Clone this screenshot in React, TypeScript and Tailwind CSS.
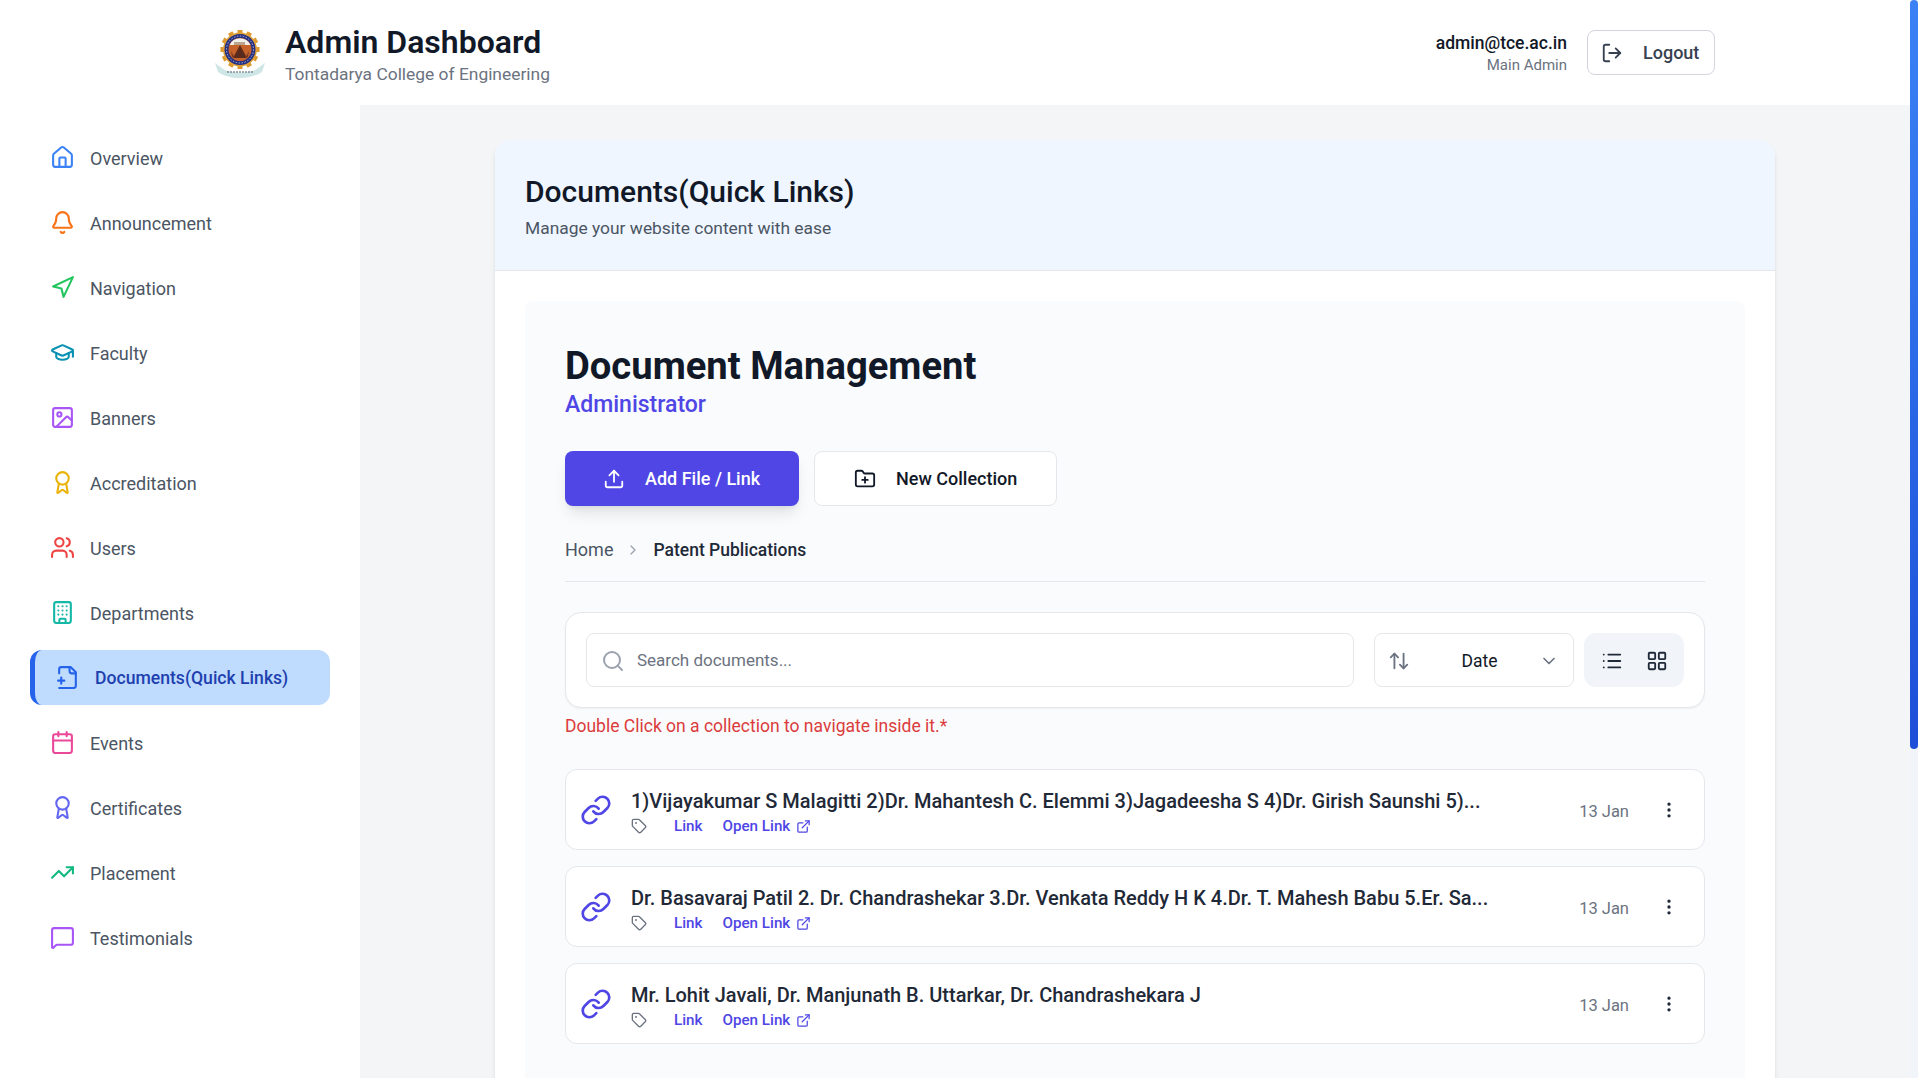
import {
  ArrowUpDown,
  Award,
  Bell,
  Building,
  Calendar,
  ChevronDown,
  ChevronRight,
  EllipsisVertical,
  ExternalLink,
  FolderPlus,
  GraduationCap,
  House,
  Image as ImageIcon,
  LayoutGrid,
  Link as LinkIcon,
  List,
  LogOut,
  MessageSquare,
  Navigation,
  Search,
  Tag,
  TrendingUp,
  Upload,
  Users,
} from 'lucide-react';

function FileAdd({ size, className }: { size: number; className?: string }) {
  return (
    <svg
      width={size}
      height={size}
      viewBox="0 0 24 24"
      fill="none"
      stroke="currentColor"
      strokeWidth="2"
      strokeLinecap="round"
      strokeLinejoin="round"
      className={className}
    >
      <path d="M4 22h14a2 2 0 0 0 2-2V7l-5-5H6a2 2 0 0 0-2 2v4" />
      <path d="M14 2v4a2 2 0 0 0 2 2h4" />
      <path d="M3 15h6" />
      <path d="M6 12v6" />
    </svg>
  );
}

const navItems = [
  { label: 'Overview', icon: House, color: 'text-[#3b82f6]' },
  { label: 'Announcement', icon: Bell, color: 'text-[#f97316]' },
  { label: 'Navigation', icon: Navigation, color: 'text-[#22c55e]' },
  { label: 'Faculty', icon: GraduationCap, color: 'text-[#0891b2]' },
  { label: 'Banners', icon: ImageIcon, color: 'text-[#a855f7]' },
  { label: 'Accreditation', icon: Award, color: 'text-[#eab308]' },
  { label: 'Users', icon: Users, color: 'text-[#ef4444]' },
  { label: 'Departments', icon: Building, color: 'text-[#14b8a6]' },
  { label: 'Documents(Quick Links)', icon: FileAdd, color: 'text-[#2563eb]', active: true },
  { label: 'Events', icon: Calendar, color: 'text-[#ec4899]' },
  { label: 'Certificates', icon: Award, color: 'text-[#6366f1]' },
  { label: 'Placement', icon: TrendingUp, color: 'text-[#10b981]' },
  { label: 'Testimonials', icon: MessageSquare, color: 'text-[#a855f7]' },
];

const documents = [
  '1)Vijayakumar S Malagitti 2)Dr. Mahantesh C. Elemmi 3)Jagadeesha S 4)Dr. Girish Saunshi 5)...',
  'Dr. Basavaraj Patil 2. Dr. Chandrashekar 3.Dr. Venkata Reddy H K 4.Dr. T. Mahesh Babu 5.Er. Sa...',
  'Mr. Lohit Javali, Dr. Manjunath B. Uttarkar, Dr. Chandrashekara J',
];

function CollegeLogo() {
  const teeth = Array.from({ length: 12 }, (_, i) => i * 30);
  return (
    <svg viewBox="0 0 56 56" className="h-14 w-14 shrink-0">
      <path d="M3 38c5 3 8 7 13 8 8 2 16 2 24 0 5-1 8-5 13-8l-3 9c-6 4-14 6-22 6s-16-2-22-6z" fill="#cfe6e6" />
      {teeth.map((deg) => (
        <rect key={deg} x="25.5" y="5" width="5" height="5" fill="#e0992c" transform={`rotate(${deg} 28 24.5)`} />
      ))}
      <circle cx="28" cy="24.5" r="17" fill="#e0a33c" />
      <circle cx="28" cy="24.5" r="15.5" fill="#26307f" />
      <circle cx="28" cy="24.5" r="13.5" fill="none" stroke="#aeb4dc" strokeWidth="1" strokeDasharray="1.5 1.5" />
      <circle cx="28" cy="24.5" r="11.5" fill="#c8622b" />
      <path d="M17.5 20a11.5 11.5 0 0 1 21 0z" fill="#f1efe9" />
      <path d="M22 17h11v3H22z" fill="#b9a48e" />
      <path d="M28 20l7 13h-14z" fill="#5a2a1c" />
      <path d="M19 26l4 7-3-1zM37 26l-4 7 3-1z" fill="#7c3a1e" />
      <path d="M15 47h26" stroke="#55616b" strokeWidth="1.2" strokeDasharray="2 1" />
    </svg>
  );
}

function Header() {
  return (
    <header className="flex h-[105px] shrink-0 items-center justify-between bg-white pl-[212px] pr-[195px] shadow-[0_1px_3px_rgba(0,0,0,0.08)]">
      <div className="flex items-center gap-[17px]">
        <CollegeLogo />
        <div>
          <h1 className="text-[32px] font-semibold leading-[42px] text-[#111827]">Admin Dashboard</h1>
          <p className="text-[17.4px] leading-[22px] text-[#6b7280]">Tontadarya College of Engineering</p>
        </div>
      </div>
      <div className="flex items-center gap-5">
        <div className="pt-[3px] text-right">
          <p className="text-[17.5px] font-medium leading-[22px] text-[#111827]">admin@tce.ac.in</p>
          <p className="text-[15px] leading-[22px] text-[#6b7280]">Main Admin</p>
        </div>
        <button className="flex h-[45px] w-[128px] items-center gap-5 rounded-lg border border-[#d1d5db] bg-white pl-[13px] text-[18px] font-medium text-[#374151]">
          <LogOut size={22} />
          Logout
        </button>
      </div>
    </header>
  );
}

function Sidebar() {
  return (
    <aside className="w-[360px] shrink-0 bg-white pt-[25px]">
      <nav className="flex flex-col gap-[10px] px-[30px]">
        {navItems.map(({ label, icon: Icon, color, active }) => (
          <a
            key={label}
            className={
              active
                ? 'flex h-[55px] items-center gap-[15px] rounded-xl border-l-[5px] border-[#2563eb] bg-[#bfdbfe] pl-5 text-[17.6px] font-medium text-[#1e40af]'
                : 'flex h-[55px] items-center gap-[15px] pl-5 text-[18px] font-[450] text-[#4b5563]'
            }
          >
            <Icon size={25} className={color} />
            <span className="pt-px">{label}</span>
          </a>
        ))}
      </nav>
    </aside>
  );
}

function DocumentRow({ title }: { title: string }) {
  return (
    <div className="flex h-[81px] items-center rounded-xl border border-[#e5e7eb] bg-white pl-[14px] pr-[25px]">
      <LinkIcon size={32} className="shrink-0 text-[#4f46e5]" />
      <div className="ml-[19px] pt-[6px]">
        <p className="mb-px text-[20px] font-medium leading-[26px] text-[#1f2937]">{title}</p>
        <div className="flex items-center text-[15.2px] font-medium leading-[22px] text-[#4f46e5]">
          <Tag size={16} className="mr-[27px] text-[#6b7280]" />
          <span>Link</span>
          <span className="ml-5">Open Link</span>
          <ExternalLink size={15} className="ml-[6px]" />
        </div>
      </div>
      <span className="ml-auto pt-[5px] text-[16.5px] text-[#6b7280]">13 Jan</span>
      <EllipsisVertical size={20} className="ml-[30px] text-[#1f2937]" />
    </div>
  );
}

function DocumentManager() {
  return (
    <div className="rounded-lg bg-[#f9fbfd] p-10">
      <h2 className="text-[38.2px] font-bold leading-[51px] text-[#111827]">Document Management</h2>
      <p className="text-[23px] font-medium leading-[26px] text-[#4f46e5]">Administrator</p>

      <div className="mt-[33px] flex gap-[15px]">
        <button className="flex h-[55px] w-[234px] items-center gap-5 rounded-lg bg-[#4f46e5] pl-[38px] text-[18px] font-medium text-white shadow-lg">
          <Upload size={22} />
          Add File / Link
        </button>
        <button className="flex h-[55px] w-[243px] items-center gap-5 rounded-lg border border-[#e5e7eb] bg-white pl-[39px] text-[18px] font-medium text-[#111827]">
          <FolderPlus size={22} />
          New Collection
        </button>
      </div>

      <div className="mt-8 flex items-center border-b border-[#e5e7eb] pb-[19px] text-[18px] leading-6">
        <span className="text-[#4b5563]">Home</span>
        <ChevronRight size={16} className="mx-3 text-[#9ca3af]" />
        <span className="text-[17.5px] font-medium text-[#1f2937]">Patent Publications</span>
      </div>

      <div className="mt-[30px] flex gap-5 rounded-2xl border border-[#e5e7eb] bg-white p-5 shadow-[0_1px_2px_rgba(0,0,0,0.05)]">
        <label className="flex h-[54px] flex-1 items-center gap-3 rounded-lg border border-[#e5e7eb] bg-white pl-[14px] pt-[2px]">
          <Search size={24} className="text-[#9ca3af]" />
          <input
            placeholder="Search documents..."
            className="flex-1 bg-transparent text-[17px] outline-none placeholder:text-[#6b7280]"
          />
        </label>
        <div className="flex h-[54px] w-[200px] items-center rounded-lg border border-[#e5e7eb] bg-white pl-[13px] pr-[14px] pt-[2px]">
          <ArrowUpDown size={22} className="text-[#6b7280]" />
          <span className="flex-1 pl-[10px] text-center text-[17.5px] text-[#111827]">Date</span>
          <ChevronDown size={20} className="text-[#6b7280]" />
        </div>
        <div className="-ml-[10px] flex h-[54px] w-[100px] items-center gap-[23px] rounded-xl bg-[#f1f5f9] pl-[17px] pt-[2px]">
          <List size={22} className="text-[#1f2937]" />
          <LayoutGrid size={22} className="text-[#1f2937]" />
        </div>
      </div>

      <p className="mt-[6px] text-[17.5px] leading-6 text-[#dc3c3c]">
        Double Click on a collection to navigate inside it.*
      </p>

      <div className="mt-[31px] flex flex-col gap-4">
        {documents.map((title) => (
          <DocumentRow key={title} title={title} />
        ))}
      </div>
    </div>
  );
}

export default function App() {
  return (
    <div className="flex h-screen overflow-hidden font-['Roboto',sans-serif]">
      <div className="flex min-w-0 flex-1 flex-col">
        <Header />
        <div className="flex min-h-0 flex-1">
          <Sidebar />
          <main className="min-w-0 flex-1 overflow-hidden bg-[#f3f5f7] px-[135px] pt-[35px]">
            <section className="rounded-2xl bg-white shadow-md">
              <div className="h-[131px] rounded-t-2xl border-b border-[#e5e7eb] bg-[#eff6ff] px-[30px] pt-[31px]">
                <h2 className="text-[30px] font-medium leading-[42px] text-[#111827]">Documents(Quick Links)</h2>
                <p className="mt-[3px] text-[17.4px] leading-[24px] text-[#4b5563]">
                  Manage your website content with ease
                </p>
              </div>
              <div className="p-[30px]">
                <DocumentManager />
              </div>
            </section>
          </main>
        </div>
      </div>
      <div className="w-2 shrink-0 bg-[#f1f5f9]">
        <div className="h-[749px] rounded-md bg-gradient-to-b from-[#3b82f6] to-[#1d4ed8]" />
      </div>
    </div>
  );
}
